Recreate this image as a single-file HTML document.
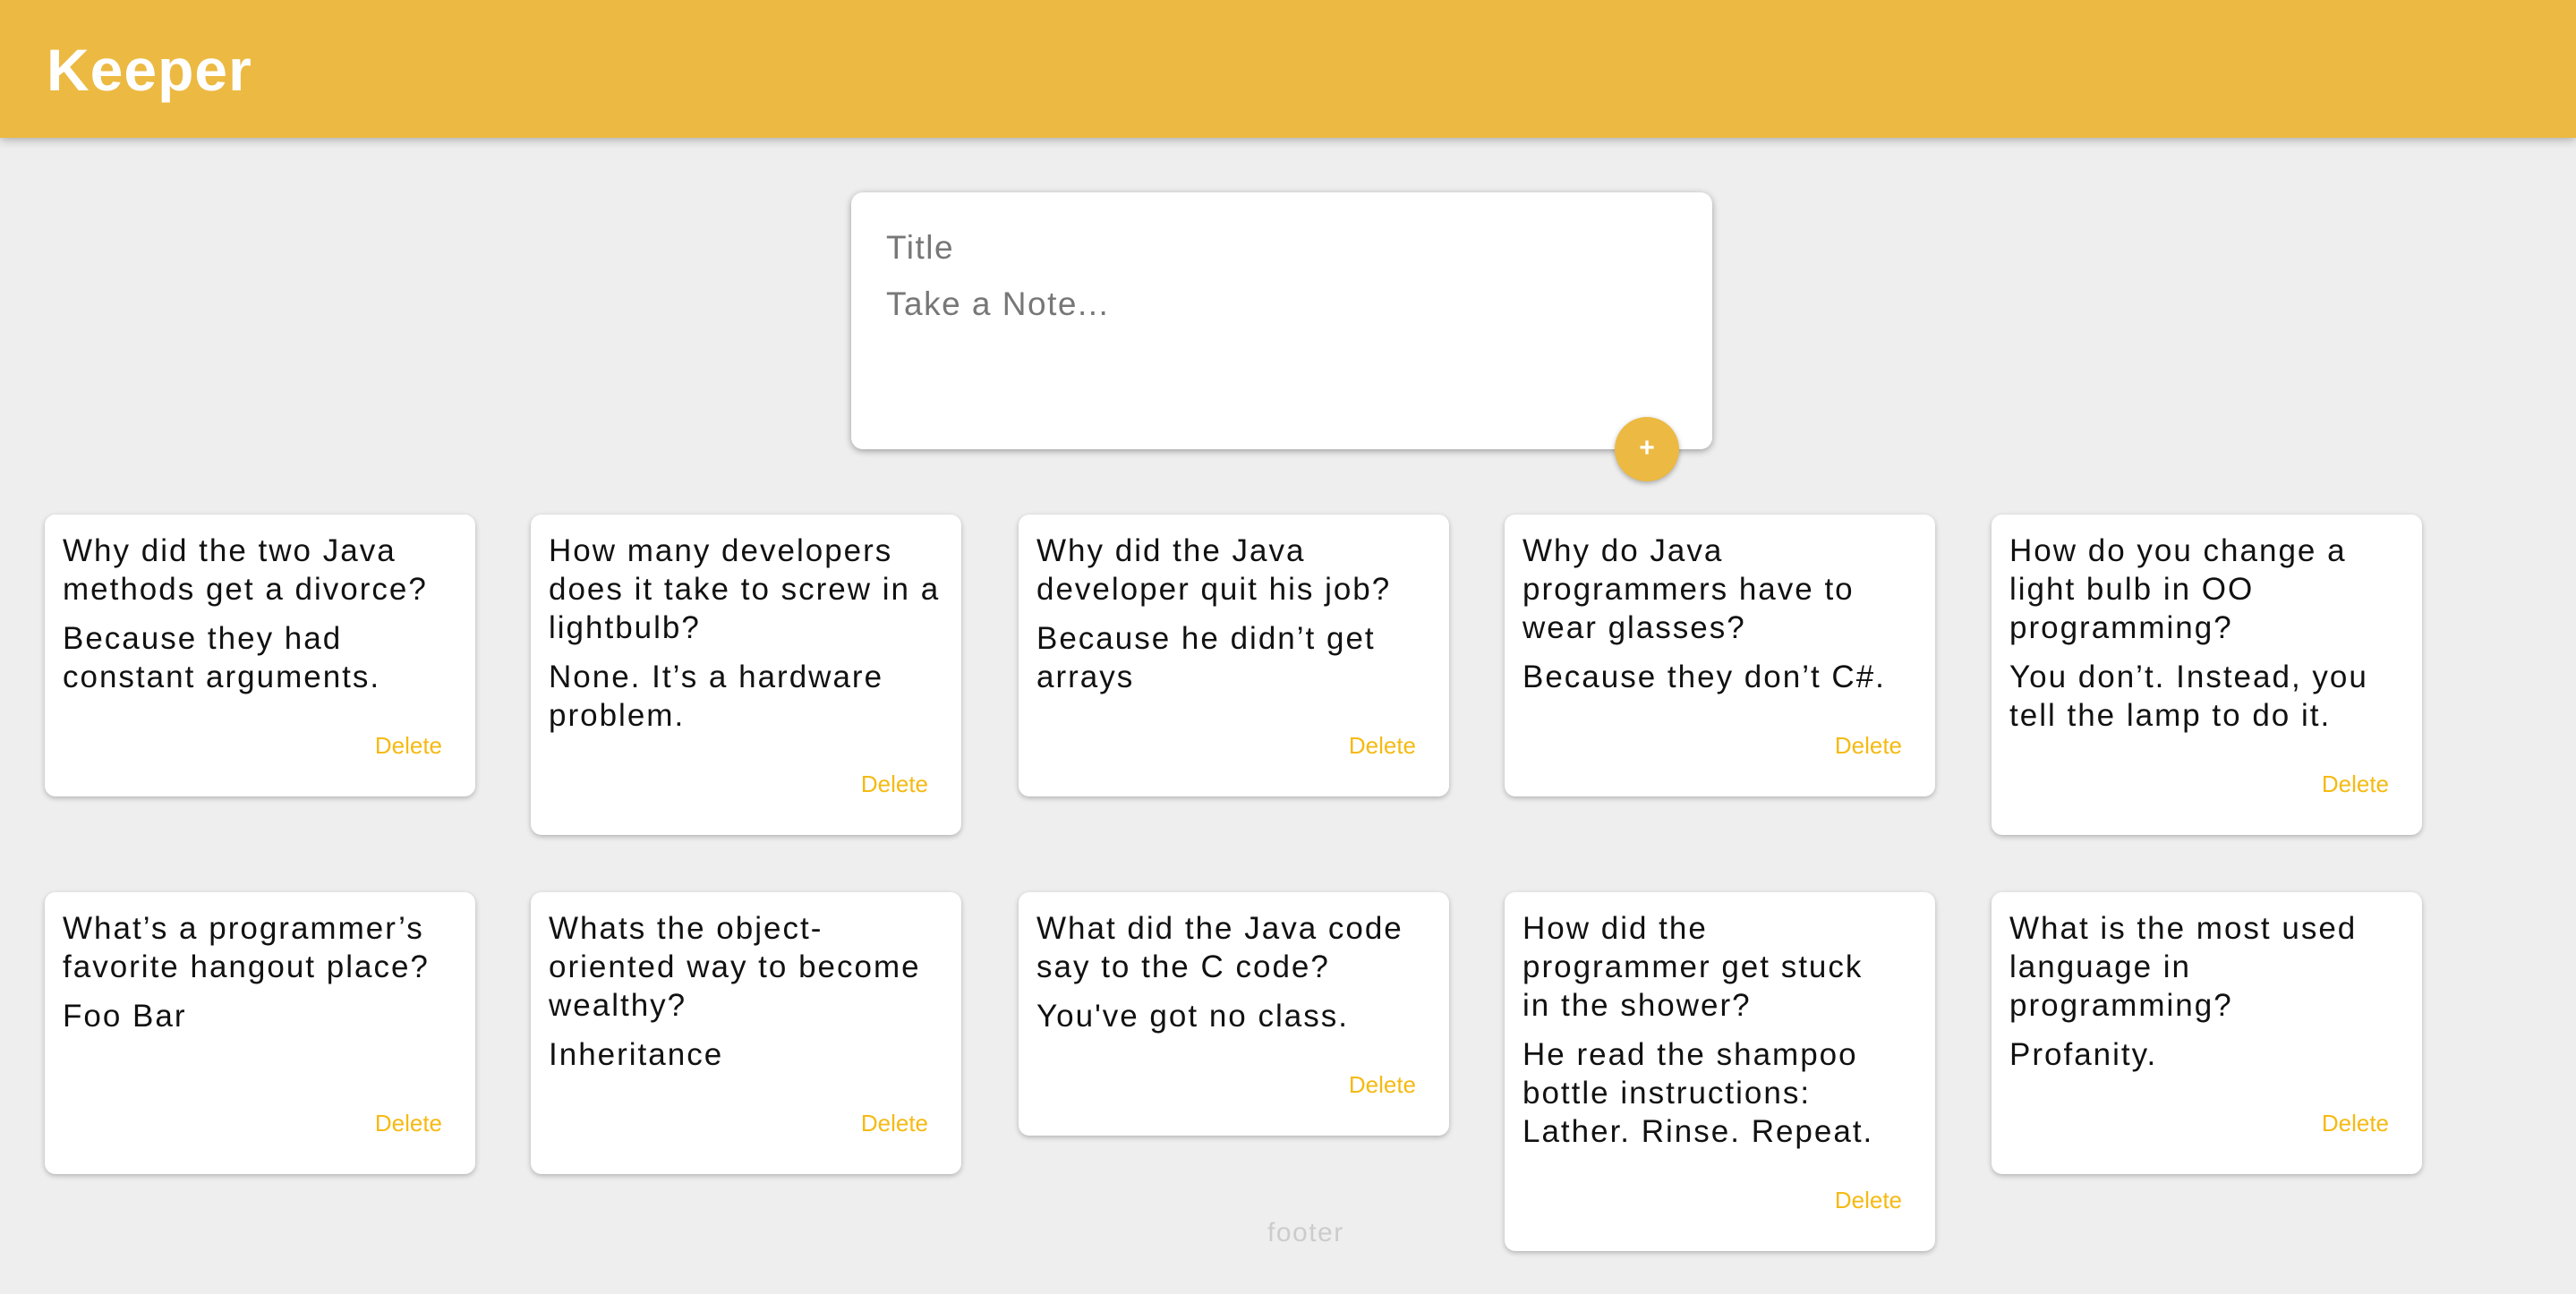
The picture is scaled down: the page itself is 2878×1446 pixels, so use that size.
<!DOCTYPE html>
<html><head><meta charset="utf-8"><style>
html,body{margin:0;padding:0}
body{width:2878px;height:1446px;background:#eeeeee;position:relative;overflow:hidden;font-family:"Liberation Sans",sans-serif}
header{position:absolute;left:0;top:0;width:2878px;height:154px;background:#ecb942;box-shadow:0 2px 10px rgba(0,0,0,.3)}
header h1{position:absolute;left:52px;top:38px;margin:0;color:#fff;font-size:66px;font-weight:bold;line-height:80px;letter-spacing:1px}
.form{position:absolute;left:951px;top:215px;width:962px;height:287px;background:#fff;border-radius:13px;box-shadow:0 2px 8px rgba(0,0,0,.35)}
.form div{position:absolute;left:39px;color:#777;font-size:37px;letter-spacing:1.5px}
.btn{position:absolute;left:1804px;top:466px;width:72px;height:72px;border-radius:50%;background:#ecb942;box-shadow:0 2px 6px rgba(0,0,0,.3);color:#fff;font-size:30px;font-weight:bold;text-align:center;line-height:70px}
.card{position:absolute;width:481px;box-sizing:border-box;background:#fff;border-radius:12px;box-shadow:0 2px 6px rgba(0,0,0,.25);padding:19px 20px 42px 20px;white-space:nowrap;color:#111;font-size:35px;letter-spacing:2px}
.card .t{line-height:43px;margin-bottom:12px}
.card .b{line-height:43px}
.card .d{text-align:right;color:#f5ba13;font-size:26px;line-height:30px;margin-top:40px;padding-right:17px;letter-spacing:0}
.footer{position:absolute;left:1416px;top:1361px;color:#ccc;font-size:30px;letter-spacing:1.5px}
</style></head><body>
<header><h1>Keeper</h1></header>
<div class="form"><div style="top:41px">Title</div><div style="top:104px">Take a Note...</div></div>
<div class="btn">+</div>

<div class="card" style="left:50px;top:575px"><div class="t">Why did the two Java<br>methods get a divorce?</div><div class="b">Because they had<br>constant arguments.</div><div class="d">Delete</div></div>
<div class="card" style="left:593px;top:575px"><div class="t">How many developers<br>does it take to screw in a<br>lightbulb?</div><div class="b">None. It’s a hardware<br>problem.</div><div class="d">Delete</div></div>
<div class="card" style="left:1138px;top:575px"><div class="t">Why did the Java<br>developer quit his job?</div><div class="b">Because he didn’t get<br>arrays</div><div class="d">Delete</div></div>
<div class="card" style="left:1681px;top:575px"><div class="t">Why do Java<br>programmers have to<br>wear glasses?</div><div class="b">Because they don’t C#.</div><div class="d">Delete</div></div>
<div class="card" style="left:2225px;top:575px"><div class="t">How do you change a<br>light bulb in OO<br>programming?</div><div class="b">You don’t. Instead, you<br>tell the lamp to do it.</div><div class="d">Delete</div></div>

<div class="card" style="left:50px;top:997px"><div class="t">What’s a programmer’s<br>favorite hangout place?</div><div class="b">Foo Bar</div><div class="d" style="margin-top:83px">Delete</div></div>
<div class="card" style="left:593px;top:997px"><div class="t">Whats the object-<br>oriented way to become<br>wealthy?</div><div class="b">Inheritance</div><div class="d">Delete</div></div>
<div class="card" style="left:1138px;top:997px"><div class="t">What did the Java code<br>say to the C code?</div><div class="b">You've got no class.</div><div class="d">Delete</div></div>
<div class="card" style="left:1681px;top:997px"><div class="t">How did the<br>programmer get stuck<br>in the shower?</div><div class="b">He read the shampoo<br>bottle instructions:<br>Lather. Rinse. Repeat.</div><div class="d">Delete</div></div>
<div class="card" style="left:2225px;top:997px"><div class="t">What is the most used<br>language in<br>programming?</div><div class="b">Profanity.</div><div class="d">Delete</div></div>

<div class="footer">footer</div>
</body></html>
